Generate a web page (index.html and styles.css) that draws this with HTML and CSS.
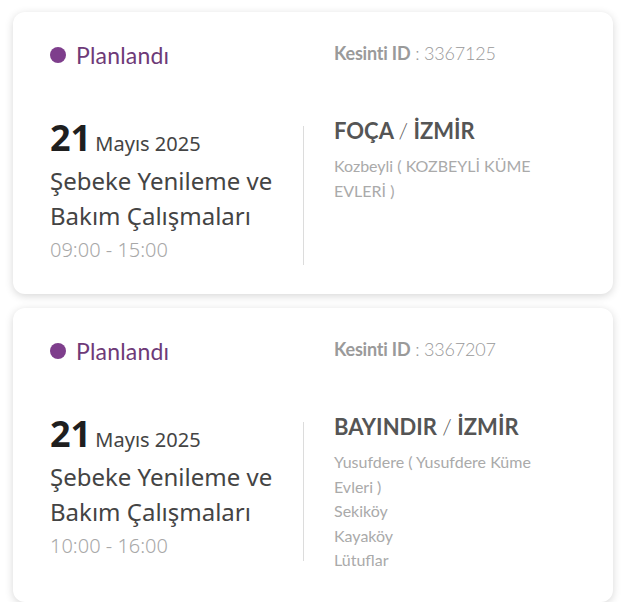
FILE: index.html
```html
<!DOCTYPE html>
<html lang="tr">
<head>
<meta charset="utf-8">
<link rel="stylesheet" href="styles.css">
</head>
<body>
<div class="list">
  <div class="card prev"></div>

  <div class="card">
    <div class="head">
      <div class="status"><span class="dot"></span>Planlandı</div>
      <div class="kid"><b>Kesinti ID</b> : 3367125</div>
    </div>
    <div class="body">
      <div class="left">
        <div class="date"><span class="day">21</span> <span class="month">Mayıs 2025</span></div>
        <div class="title">Şebeke Yenileme ve Bakım Çalışmaları</div>
        <div class="time">09:00 - 15:00</div>
      </div>
      <div class="right">
        <div class="place">FOÇA <span class="slash">/</span> İZMİR</div>
        <div class="areas">
          <div>Kozbeyli ( KOZBEYLİ KÜME EVLERİ )</div>
        </div>
      </div>
    </div>
  </div>

  <div class="card">
    <div class="head">
      <div class="status"><span class="dot"></span>Planlandı</div>
      <div class="kid"><b>Kesinti ID</b> : 3367207</div>
    </div>
    <div class="body">
      <div class="left">
        <div class="date"><span class="day">21</span> <span class="month">Mayıs 2025</span></div>
        <div class="title">Şebeke Yenileme ve Bakım Çalışmaları</div>
        <div class="time">10:00 - 16:00</div>
      </div>
      <div class="right">
        <div class="place">BAYINDIR <span class="slash">/</span> İZMİR</div>
        <div class="areas">
          <div>Yusufdere ( Yusufdere Küme Evleri )</div>
          <div>Sekiköy</div>
          <div>Kayaköy</div>
          <div>Lütuflar</div>
        </div>
      </div>
    </div>
  </div>
</div>
</body>
</html>
```

FILE: styles.css
```css
html, body {
  margin: 0;
  padding: 0;
  background: #ffffff;
}
body {
  font-family: "Lato", "Noto Sans", sans-serif;
  overflow: hidden;
}
.list {
  display: flex;
  flex-direction: column;
  gap: 14px;
  padding: 12px 12px 0 13px;
}
.card {
  background: #fff;
  border-radius: 12px;
  box-shadow: 0 2px 8px rgba(0, 0, 0, 0.16);
  padding: 29px 20px 29px 37px;
}
.card.prev {
  height: 0;
  padding: 0;
  margin-top: -14px;
  margin-bottom: 0;
}
.head {
  display: grid;
  grid-template-columns: 284px 1fr;
  align-items: center;
  height: 24px;
}
.status {
  display: flex;
  align-items: center;
  gap: 10px;
  font-family: "Lato", sans-serif;
  font-size: 23px;
  color: #6e3a78;
  letter-spacing: 0.2px;
}
.dot {
  width: 16px;
  height: 16px;
  border-radius: 50%;
  background: #7e3e8c;
}
.kid {
  font-family: "Lato", sans-serif;
  font-size: 18px;
  font-weight: 300;
  color: #999;
  letter-spacing: -0.2px;
  margin-top: -4px;
}
.kid b {
  font-weight: 700;
  color: #9a9a9a;
}
.body {
  display: flex;
  margin-top: 61px;
}
.left {
  width: 253px;
  border-right: 1px solid #dcdcdc;
  align-self: flex-start;
  font-family: "Noto Sans", sans-serif;
}
.date {
  line-height: 36px;
  margin-top: -6px;
  color: #222;
}
.day {
  font-size: 36px;
  font-weight: 700;
  color: #1f1f1f;
}
.month {
  font-size: 20px;
  color: #444;
}
.title {
  font-size: 24px;
  line-height: 35px;
  color: #444;
  width: 240px;
}
.time {
  font-size: 20px;
  font-weight: 300;
  line-height: 30px;
  color: #a8a8a8;
  margin-top: 2px;
}
.right {
  padding-left: 30px;
  width: 212px;
}
.place {
  font-size: 22px;
  font-weight: 700;
  color: #555;
  line-height: 26px;
  margin-top: -8px;
}
.slash {
  font-weight: 300;
}
.areas {
  margin-top: 10px;
  font-size: 16px;
  line-height: 24.5px;
  color: #aaa;
}
```
